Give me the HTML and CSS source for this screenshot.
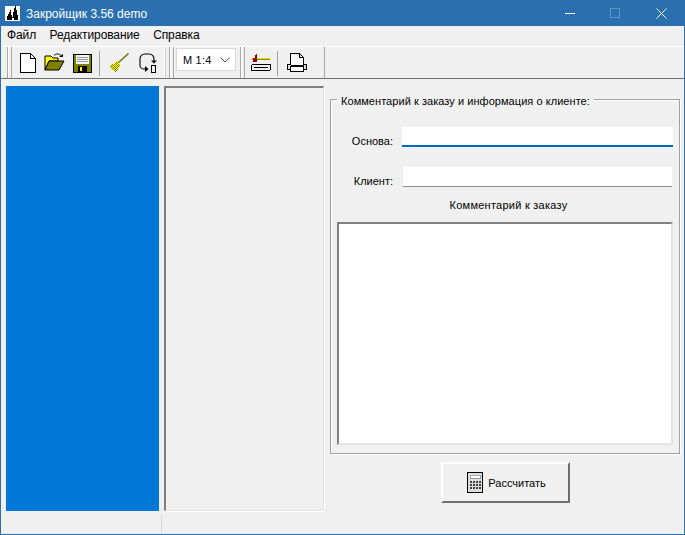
FILE: index.html
```html
<!DOCTYPE html>
<html lang="ru">
<head>
<meta charset="utf-8">
<title>Закройщик 3.56 demo</title>
<link rel="stylesheet" href="styles.css">
</head>
<body>
<div class="window">
  <header class="titlebar">
    <svg class="app-icon" width="15" height="15" viewBox="0 0 15 15" shape-rendering="crispEdges"><rect width="15" height="15" fill="#fff"/><path d="M2 14V10H3V8H4V6H5V4H6V9H7V11H8V6H9V2H10V0H11V4H12V9H13V14H9V12H7V14Z" fill="#000"/></svg>
    <span class="title">Закройщик 3.56 demo</span>
    <div class="winbtns">
      <span class="winbtn"><svg width="11" height="11" viewBox="0 0 11 11"><path d="M1 5.5H11" stroke="#fff"/></svg></span>
      <span class="winbtn"><svg width="11" height="11" viewBox="0 0 11 11"><rect x=".5" y=".5" width="9" height="9" fill="none" stroke="#5f94c6"/></svg></span>
      <span class="winbtn"><svg width="11" height="11" viewBox="0 0 11 11"><path d="M.5 .5L10.5 10.5M10.5 .5L.5 10.5" stroke="#fff"/></svg></span>
    </div>
  </header>
  <nav class="menubar">
    <span>Файл</span><span>Редактирование</span><span>Справка</span>
  </nav>
  <div class="toolbar">
    <span class="grip"></span>
    <span class="tool tool-new"><svg width="16" height="20" viewBox="0 0 16 20" shape-rendering="crispEdges"><path d="M.5 .5H10.5L15.5 5.5V19.5H.5Z" fill="#fff" stroke="#000"/><path d="M10.5 .5V5.5H15.5" fill="none" stroke="#000"/></svg></span>
    <span class="tool tool-open"><svg width="21" height="18" viewBox="0 0 21 18"><path d="M1 17V3H7L9 5H14V8H5Z" fill="#ff0" stroke="#000"/><path d="M1 17L5 8H20L15 17Z" fill="#7f7f00" stroke="#000"/><path d="M10 2.5C12 .5 15 .5 17 2.5" fill="none" stroke="#000"/><path d="M15 4H19V1Z" fill="#000"/></svg></span>
    <span class="tool tool-save"><svg width="19" height="19" viewBox="0 0 19 19" shape-rendering="crispEdges"><rect x=".5" y=".5" width="18" height="18" fill="#7f7f00" stroke="#000"/><rect x="3" y="1" width="13" height="9" fill="#f4f4f4"/><path d="M4 3H15M4 5H15M4 7H15" stroke="#999"/><rect x="5" y="12" width="9" height="6" fill="#000"/><rect x="7" y="13" width="2" height="4" fill="#ff0"/></svg></span>
    <span class="sep sep-a"></span>
    <span class="tool tool-broom"><svg width="20" height="20" viewBox="0 0 20 20"><defs><pattern id="weave" width="2" height="2" patternUnits="userSpaceOnUse"><rect width="2" height="2" fill="#ff0"/><rect width="1" height="1" fill="#7f7f00"/><rect x="1" y="1" width="1" height="1" fill="#7f7f00"/></pattern></defs><path d="M19.500 .5L9 10" stroke="#6f6f00" stroke-width="1.400"/><path d="M7 8L11 12L9 16L7 19L4 17L0 14L4 11Z" fill="url(#weave)" shape-rendering="crispEdges"/></svg></span>
    <span class="tool tool-cycle"><svg width="18" height="20" viewBox="0 0 18 20" fill="none" stroke="#000" stroke-width="1.1"><path d="M6 16H4.500C2.500 16 1 14 1 12V6C1 3 3 1 6 1H10C13 1 15 3 15 6V8"/><path d="M12 7.500L15 10.500L18 7.500Z" fill="#000" stroke="none"/><path d="M6 13V19L9.500 16Z" fill="#000" stroke="none"/><rect x="12.500" y="12.500" width="4" height="7" shape-rendering="crispEdges"/></svg></span>
    <span class="band-edge"></span>
    <span class="grip grip-b"></span>
    <label class="combo"><span class="combo-text">М 1:4</span><svg width="10" height="6" viewBox="0 0 10 6"><path d="M.5 .5L5 5L9.500 .5" fill="none" stroke="#555"/></svg></label>
    <span class="grip grip-c"></span>
    <span class="tool tool-hammer"><svg width="20" height="17" viewBox="0 0 20 17" shape-rendering="crispEdges"><rect x="1" y="4" width="18" height="1" fill="#e0e000"/><rect x="1" y="5" width="18" height="1" fill="#8a8a00"/><path d="M2 8V4H4V1H5V0H6V8Z" fill="#a00000"/><rect x=".5" y="10.500" width="19" height="6" rx="1.500" fill="#eee" stroke="#000"/><path d="M3 13.500H17" stroke="#000"/></svg></span>
    <span class="sep sep-b"></span>
    <span class="tool tool-print"><svg width="20" height="19" viewBox="0 0 20 19" shape-rendering="crispEdges"><path d="M3.500 .5H12.500L16.500 4.500V12.500H3.500Z" fill="#f8f8f8" stroke="#000"/><path d="M12.500 .5V4.500H16.500" fill="none" stroke="#000"/><path d="M3.500 11.500H.5V16.500H3.500M16.500 11.500H19.500V16.500H16.500" fill="#ddd" stroke="#000"/><rect x="3.500" y="13.500" width="13" height="5" fill="#fff" stroke="#000"/></svg></span>
    <span class="band-end"></span>
  </div>
  <main class="content">
    <div class="side-blue"></div>
    <div class="side-preview"></div>
    <section class="details">
      <fieldset class="group">
        <legend>Комментарий к заказу и информация о клиенте:</legend>
        <div class="form-row">
          <span class="field-label">Основа:</span>
          <span class="field field-active"></span>
        </div>
        <div class="form-row form-row-second">
          <span class="field-label">Клиент:</span>
          <span class="field field-idle"></span>
        </div>
        <div class="comment-label">Комментарий к заказу</div>
        <div class="memo"></div>
      </fieldset>
      <div class="actions">
        <button class="calc" type="button">
          <svg width="16" height="21" viewBox="0 0 16 21" shape-rendering="crispEdges"><rect x=".5" y=".5" width="15" height="20" fill="#ddd" stroke="#000"/><rect x="3" y="3" width="10" height="3" fill="#fff" stroke="#555" stroke-width=".5"/><path d="M3 9H5V11H3ZM6 9H8V11H6ZM9 9H11V11H9ZM12 9H14V11H12ZM3 12H5V14H3ZM6 12H8V14H6ZM9 12H11V14H9ZM12 12H14V14H12ZM3 15H5V17H3ZM6 15H8V17H6ZM9 15H11V17H9ZM12 15H14V17H12Z" fill="#444"/></svg>
          <span>Рассчитать</span>
        </button>
      </div>
    </section>
  </main>
  <footer class="statusbar"><span class="status-cell"></span></footer>
</div>
</body>
</html>
```
FILE: styles.css
```css
* { box-sizing: border-box; }
html, body { margin: 0; padding: 0; height: 100%; }
body {
  font-family: "Liberation Sans", Arial, sans-serif;
  font-size: 11px;
  color: #000;
  background: #f0f0f0;
  overflow: hidden;
}
.window {
  height: 535px;
  width: 685px;
  display: flex;
  flex-direction: column;
  border: 1px solid #2a6fb0;
  border-top: 0;
  background: #f0f0f0;
}
.titlebar {
  height: 26px;
  flex: none;
  margin: 0 -1px;
  padding-left: 5px;
  padding-right: 1px;
  background: #2a6fb0;
  color: #fff;
  display: flex;
  align-items: center;
}
.app-icon { flex: none; }
.title { margin-left: 6px; padding-top: 1px; font-size: 12px; }
.winbtns { margin-left: auto; display: flex; }
.winbtn {
  width: 46px;
  height: 26px;
  display: flex;
  align-items: center;
  justify-content: center;
}
.menubar {
  height: 20px;
  flex: none;
  display: flex;
  align-items: center;
  gap: 13.500px;
  padding-left: 6px;
  padding-bottom: 2px;
  font-size: 12px;
  letter-spacing: -.1px;
}
.toolbar {
  height: 33px;
  flex: none;
  display: flex;
  align-items: flex-start;
  border-top: 1px solid #fff;
  border-bottom: 1px solid #6f6f6f;
  padding-left: 6px;
}
.grip {
  width: 5px;
  height: 31px;
  flex: none;
  border-left: 1px solid #a8a8a8;
  border-right: 1px solid #a8a8a8;
  box-shadow: inset 1px 0 0 #fff;
}
.tool { display: block; flex: none; margin-top: 6px; line-height: 0; }
.tool-new { margin-left: 8px; }
.tool-open { margin-left: 8px; }
.tool-save { margin-left: 8px; margin-top: 7px; }
.sep { width: 1px; height: 25px; margin-top: 4px; background: #a0a0a0; flex: none; }
.sep-a { margin-left: 7px; }
.tool-broom { margin-left: 9px; }
.tool-cycle { margin-left: 10px; }
.band-edge { width: 1px; height: 31px; background: #fff; margin-left: 7px; flex: none; box-shadow: 1px 0 0 #ccc; }
.grip-b { margin-left: 4px; }
.combo {
  width: 60px;
  height: 23px;
  margin-top: 1px;
  margin-left: 2px;
  background: #fff;
  border: 1px solid #d8d8d8;
  display: flex;
  align-items: center;
  justify-content: space-between;
  padding: 0 5px 0 6px;
  flex: none;
}
.combo-text { font-size: 11px; letter-spacing: .2px; }
.grip-c { margin-left: 4px; }
.tool-hammer { margin-left: 6px; margin-top: 7px; }
.sep-b { margin-left: 6px; }
.tool-print { margin-left: 9px; }
.band-end { width: 1px; height: 31px; background: #a8a8a8; margin-left: 17px; flex: none; }
.content {
  flex: 1;
  min-height: 0;
  display: flex;
  align-items: flex-start;
  padding: 7px 6px 0 5px;
}
.side-blue { width: 153px; height: 425px; background: #0078d7; flex: none; }
.side-preview {
  width: 160px;
  height: 425px;
  margin-left: 5px;
  flex: none;
  background: #f0f0f0;
  border: 1px solid #e3e3e3;
  border-left: 2px solid #808080;
  border-top: 2px solid #808080;
  box-shadow: 1px 1px 0 #fff;
}
.details { margin-left: 6px; flex: 1; min-width: 0; }
.group {
  margin: 5px 0 0;
  padding: 0 6px 7px 6px;
  height: 363px;
  width: 348px;
  border: 1px solid #a0a0a0;
  box-shadow: inset 1px 1px 0 #fff, 1px 1px 0 #fff;
}
.group legend { margin-left: 0; padding: 3px 4px 0; line-height: 14px; letter-spacing: .05px; }
.form-row {
  display: grid;
  grid-template-columns: 62px 271px;
  column-gap: 9px;
  align-items: center;
  margin-top: 19px;
  margin-left: -6px;
}
.form-row-second { margin-top: 20px; }
.field-label { text-align: right; padding-top: 7px; }
.field { display: block; height: 20px; background: #fff; }
.field-active { border-bottom: 2px solid #0067c0; }
.field-idle { border-bottom: 1px solid #8c8c8c; margin: 0 1px; }
.comment-label { text-align: center; margin-top: 11px; margin-bottom: -1px; line-height: 14px; padding-left: 7px; letter-spacing: .25px; }
.memo {
  height: 223px;
  width: 336px;
  margin-top: 11px;
  background: #fff;
  border: 2px solid #808080;
  border-right: 2px solid #e3e3e3;
  border-bottom: 2px solid #e3e3e3;
}
.actions { display: flex; justify-content: flex-start; margin-top: 8px; padding-left: 111px; }
.calc {
  width: 129px;
  height: 41px;
  background: #f0f0f0;
  border: 2px solid;
  border-color: #fff #6e6e6e #6e6e6e #fff;
  font: inherit;
  display: flex;
  align-items: center;
  justify-content: center;
  gap: 5px;
  padding: 0 0 0 2px;
}
.statusbar { height: 21px; flex: none; margin-top: auto; display: flex; padding-left: 160px; padding-top: 2px; }
.status-cell { width: 1px; height: 19px; background: #d8d8d8; }
```
